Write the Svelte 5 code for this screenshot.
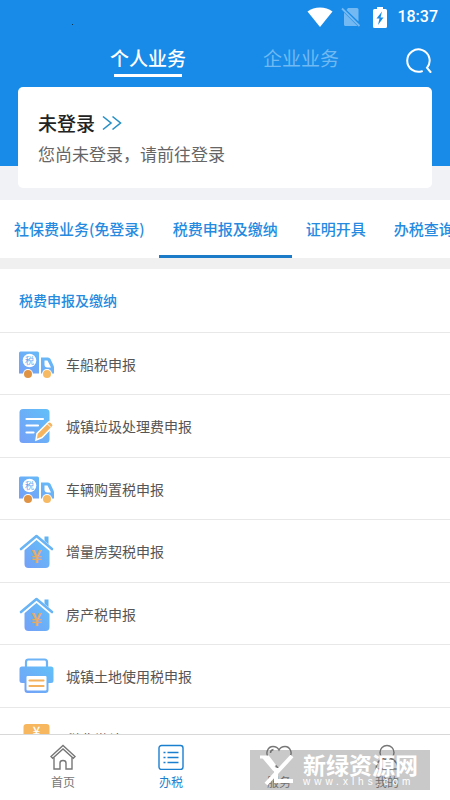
<script lang="ts">
	type IconName = 'truck' | 'form' | 'house' | 'printer' | 'pay';

	const modes = ['个人业务', '企业业务'];
	const categories = ['社保费业务(免登录)', '税费申报及缴纳', '证明开具', '办税查询'];
	const services: { label: string; icon: IconName }[] = [
		{ label: '车船税申报', icon: 'truck' },
		{ label: '城镇垃圾处理费申报', icon: 'form' },
		{ label: '车辆购置税申报', icon: 'truck' },
		{ label: '增量房契税申报', icon: 'house' },
		{ label: '房产税申报', icon: 'house' },
		{ label: '城镇土地使用税申报', icon: 'printer' },
		{ label: '税费缴纳', icon: 'pay' }
	];
	const navItems = ['首页', '办税', '服务', '我的'];

	let mode = $state(0);
	let category = $state(1);
	let nav = $state(1);
</script>

<div class="screen">
	<header class="header">
		<div class="status-bar">
			<span class="status-dot"></span>
			<svg width="26" height="20" viewBox="0 0 26 20" fill="#fff">
				<path d="M13 20 .5 4.5C4 1.7 8.3.5 13 .5s9 1.2 12.500 4z" />
			</svg>
			<svg class="sim" width="20" height="20" viewBox="0 0 20 20">
				<g opacity=".4">
					<path d="M7 1h9q1.500 0 1.500 1.500V14.500L5.500 3zM3 5.500 16.500 19H4.500Q3 19 3 17.500z" fill="#fff" />
					<path d="m1 1.500 17.500 17.500" stroke="#fff" stroke-width="1.800" />
				</g>
			</svg>
			<svg class="battery" width="14" height="21" viewBox="0 0 14 21">
				<path d="M4 0h6v2h2.500Q14 2 14 3.500v16q0 1.500-1.500 1.500h-11Q0 21 0 19.500v-16Q0 2 1.500 2H4z" fill="#fff" />
				<path d="M9 4.500 3.500 11.500h3L5 18l5.500-7.500h-3z" fill="#188be8" />
			</svg>
			<time>18:37</time>
		</div>
		<div class="mode-bar">
			{#each modes as label, i}
				<button class="mode" class:active={mode === i} onclick={() => (mode = i)}>{label}</button>
			{/each}
			<button class="search" aria-label="搜索">
				<svg width="26" height="26" viewBox="0 0 26 26" fill="none" stroke="#fff" stroke-width="2" stroke-linecap="round">
					<path d="M16 23.200A11.200 11.200 0 1 1 21 19.800L24.500 24" />
				</svg>
			</button>
		</div>
	</header>

	<section class="login-area">
		<a class="login-card" href="#login">
			<span class="login-title">
				未登录
				<svg width="20" height="16" viewBox="0 0 20 16" fill="none" stroke="#268fc6" stroke-width="1.6">
					<path d="m1 1.500 8 6.500-8 6.500M10.500 1.500l8 6.500-8 6.500" />
				</svg>
			</span>
			<span class="login-hint">您尚未登录，请前往登录</span>
		</a>
	</section>

	<div class="categories">
		{#each categories as label, i}
			<button class="category" class:active={category === i} onclick={() => (category = i)}>{label}</button>
		{/each}
	</div>

	<main class="services">
		<h2>税费申报及缴纳</h2>
		<ul>
			{#each services as service}
				<li>
					<a href="#service">
						<svg width="36" height="36" viewBox="0 0 36 36">
							<defs>
								<linearGradient id="blue" x1="1" y1="0" x2="0" y2="1">
									<stop offset="0" stop-color="#62c0f8" />
									<stop offset="1" stop-color="#749ff7" />
								</linearGradient>
							</defs>
							{#if service.icon === 'truck'}
								<path d="M2.500 5.500h17Q21 5.500 21 7v20.500H1V7q0-1.500 1.500-1.500zM23 11.500h7q1.500 0 2.500 1.500l3 6.500q.5 1 .5 2v6H23z" fill="url(#blue)" />
								<path d="M26.500 14.500h3l3.500 7h-3.500q-3 0-3-3z" fill="#fff" />
								<circle cx="11.500" cy="14.500" r="6.800" fill="#fff" />
								<text x="11.500" y="18" text-anchor="middle" font-size="9" fill="#6ba7ef">税</text>
								<circle cx="10" cy="28" r="5" fill="#fff" />
								<circle cx="10" cy="28" r="4" fill="#df9445" />
								<circle cx="29" cy="28" r="5" fill="#fff" />
								<circle cx="29" cy="28" r="4" fill="#f7ba64" />
							{:else if service.icon === 'form'}
								<rect x="1.500" y="1" width="30" height="34" rx="3.500" fill="url(#blue)" />
								<path d="M8.500 11H25M8.500 17.500H20M8.500 24.500h7" stroke="#fff" stroke-width="2.200" stroke-linecap="round" />
								<path d="m19 25.500 11-11q1.500-1.500 3-.200l1.500 1.500q1.500 1.500 0 3L24 29.500 18 32z" fill="#f5b560" stroke="#fff" stroke-width="1.500" />
								<path d="m29.500 16 3.500 3.500" stroke="#fff" />
							{:else if service.icon === 'house'}
								<path d="M26.500 3.500h4v10l-4-3.500z" fill="#62b3f3" />
								<path d="M18.500 6 31.500 17v14q0 4-4 4h-17q-4 0-4-4V17z" fill="url(#blue)" />
								<path d="M2.500 17.500 18.500 4 34.500 17.500" fill="none" stroke="#fff" stroke-width="4.500" />
								<path d="M3 16 18.500 3 34 16" fill="none" stroke="#68b4f5" stroke-width="2.600" stroke-linecap="round" stroke-linejoin="round" />
								<text x="18.500" y="30" text-anchor="middle" font-size="18" font-weight="700" fill="#e3ab6c">¥</text>
							{:else if service.icon === 'printer'}
								<path d="M8 10V4q0-2.500 2.500-2.500h16Q29 1.500 29 4v6" fill="none" stroke="#6db3f6" stroke-width="2.200" />
								<path d="M4 8.500h29q2.500 0 2.500 2.500v11.500q0 2.500-2.500 2.500h-2.500v7q0 3-3 3h-18q-3 0-3-3v-7H4q-2.500 0-2.500-2.500V11q0-2.500 2.500-2.500z" fill="url(#blue)" />
								<rect x="8.500" y="18" width="20" height="14.500" rx="1" fill="#fff" />
								<path d="M11.500 22.500h14M11.500 28h14" stroke="#f4b15e" stroke-width="2.200" stroke-linecap="round" />
							{:else}
								<rect x="5.500" y="3" width="26" height="30" rx="3" fill="#f6b75e" />
								<text x="18.500" y="15" text-anchor="middle" font-size="13" font-weight="500" fill="#fff">¥</text>
							{/if}
						</svg>
						{service.label}
					</a>
				</li>
			{/each}
		</ul>
	</main>

	<nav class="bottom-nav">
		{#each navItems as label, i}
			<button class:active={nav === i} onclick={() => (nav = i)}>
				<svg width="26" height="26" viewBox="0 0 26 26" fill="none" stroke="currentColor" stroke-width="1.400">
					{#if i === 0}
						<path d="M1 12.500 13 1.500l12 11-1.700 1.700L13 5 2.700 14.200z" />
						<path d="M4 13.500V25h6v-6q0-2.500 3-2.500t3 2.500v6h6V13.500" />
					{:else if i === 1}
						<rect x="1" y="1.500" width="24" height="24" rx="2.500" />
						<path d="M9.500 8.500h11M9.500 13.500h11M9.500 18.500h11M5.500 8.500h2M5.500 13.500h2M5.500 18.500h2" />
					{:else if i === 2}
						<path d="M13 25 3 14.500C-1.500 9 2 2.500 7 2.500c3 0 5 1.500 6 3.500 1-2 3-3.500 6-3.500 5 0 8.500 6.500 4 12z" />
						<path d="M4.500 9q0-3 3-3.500" />
					{:else}
						<circle cx="13" cy="8.500" r="7" />
						<path d="M9 14.500q-7 3-7 10.500h22q0-7.500-7-10.500" />
					{/if}
				</svg>
				<span>{label}</span>
			</button>
		{/each}
	</nav>

	<div class="watermark">
		<svg width="36" height="30" viewBox="0 0 36 30" fill="none" stroke="#fff">
			<path d="M0 2h8l7 9" stroke-width="3" />
			<path d="m4 2 11 13M32 1 6 29" stroke-width="4" />
			<path d="M16 13v13h17" stroke-width="4" />
		</svg>
		<div class="watermark-text">
			<strong>新绿资源网</strong>
			<span>www.xlhs.com</span>
		</div>
	</div>
</div>

<style>
	:global(body) {
		background: #fff;
	}

	.screen {
		position: relative;
		display: flex;
		flex-direction: column;
		height: 100vh;
		overflow: hidden;
		font-family: 'Noto Sans CJK SC', 'Noto Sans', sans-serif;
		color: #555;
	}

	button {
		padding: 0;
		border: 0;
		background: none;
		font-family: inherit;
		cursor: pointer;
	}

	a {
		color: inherit;
		text-decoration: none;
	}

	svg {
		flex-shrink: 0;
	}

	.header {
		flex-shrink: 0;
		padding-bottom: 79px;
		background: #188be8;
	}

	.status-bar {
		display: flex;
		align-items: center;
		height: 34px;
		padding: 0 12px 0 72px;
		color: #fff;
		font: 500 16px/34px Roboto, sans-serif;
	}

	.status-dot {
		width: 1px;
		height: 1px;
		margin: 14px auto 0 0;
		background: #0d3553;
	}

	.sim {
		margin: 0 12px 0 8px;
	}

	.battery {
		margin-right: 10px;
	}

	.mode-bar {
		position: relative;
		display: flex;
		gap: 77px;
		height: 53px;
		padding: 0 32px 0 110px;
	}

	.mode {
		position: relative;
		height: 48px;
		color: #70b9f3;
		font-size: 19px;
		line-height: 48px;
		white-space: nowrap;
	}

	.mode.active {
		color: #fff;
		font-weight: 500;
	}

	.mode.active::after {
		content: '';
		position: absolute;
		right: 4px;
		bottom: 5px;
		left: 4px;
		height: 3px;
		background: #fff;
	}

	.search {
		position: absolute;
		top: 14px;
		right: 18px;
		height: 26px;
	}

	.login-area {
		flex-shrink: 0;
		margin-top: -79px;
		padding: 0 18px 12px;
		background: linear-gradient(#188be8 79px, #f0f2f5 79px);
	}

	.login-card {
		display: flex;
		flex-direction: column;
		gap: 2px;
		padding: 22px 20px 20px;
		border-radius: 5px;
		background: #fff;
	}

	.login-title {
		display: flex;
		align-items: center;
		gap: 7px;
		color: #222;
		font-size: 19px;
		font-weight: 500;
		line-height: 28px;
	}

	.login-hint {
		color: #666;
		font-size: 17px;
		line-height: 29px;
	}

	.categories {
		display: flex;
		flex-shrink: 0;
		overflow: hidden;
		border-bottom: 11px solid #f0f0f0;
	}

	.category {
		flex-shrink: 0;
		height: 58px;
		padding: 0 14px;
		border-top: 2px solid transparent;
		border-bottom: 3px solid transparent;
		color: #268be0;
		font-size: 15px;
		font-weight: 500;
	}

	.category.active {
		border-bottom-color: #1b7bc8;
	}

	.services {
		flex: 1;
		min-height: 0;
		overflow: hidden;
	}

	h2 {
		margin: 0;
		padding-left: 19px;
		border-bottom: 1px solid #e8e8e8;
		color: #268be0;
		font-size: 14px;
		font-weight: 500;
		line-height: 63px;
	}

	ul {
		display: grid;
		grid-auto-rows: 62px 63px;
		margin: 0;
		padding: 0;
		list-style: none;
	}

	li {
		border-bottom: 1px solid #e8e8e8;
	}

	li a {
		display: flex;
		align-items: center;
		gap: 12px;
		height: 100%;
		padding-left: 18px;
		font-size: 14px;
	}

	.bottom-nav {
		display: flex;
		flex-shrink: 0;
		height: 65px;
		padding: 0 9px;
		border-top: 1px solid #d8d8d8;
		background: #fff;
	}

	.bottom-nav button {
		display: flex;
		flex: 1;
		flex-direction: column;
		align-items: center;
		gap: 2px;
		padding-top: 9px;
		color: #777;
		font-size: 12px;
		line-height: 20px;
	}

	.bottom-nav button.active {
		color: #1b7fd0;
	}

	.watermark {
		position: absolute;
		right: 20px;
		bottom: 10px;
		display: flex;
		align-items: center;
		gap: 7px;
		width: 180px;
		height: 40px;
		padding-left: 10px;
		box-sizing: border-box;
		background: rgba(100, 100, 100, 0.35);
		color: #fff;
		pointer-events: none;
	}

	.watermark-text {
		display: flex;
		flex-direction: column;
	}

	.watermark strong {
		font-size: 23px;
		line-height: 24px;
	}

	.watermark span {
		font: 10px/12px 'Liberation Sans', sans-serif;
		letter-spacing: 4px;
	}
</style>
